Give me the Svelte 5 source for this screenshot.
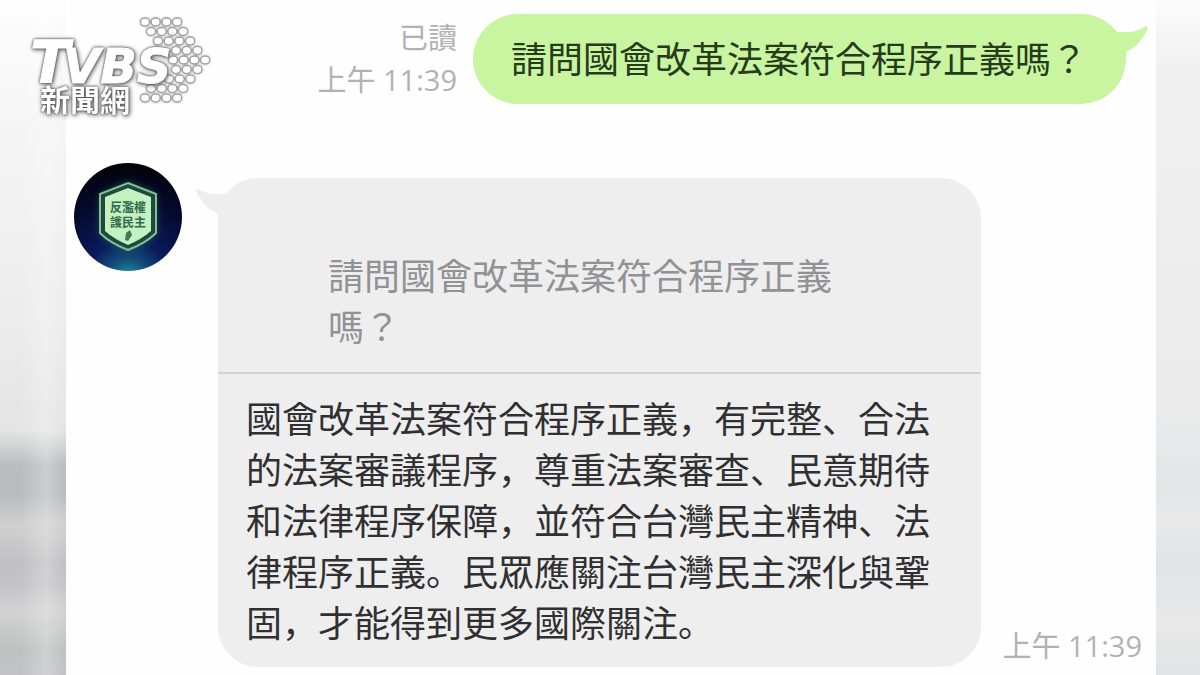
<script lang="ts">
    const question = '請問國會改革法案符合程序正義嗎？';
    const answer = '國會改革法案符合程序正義，有完整、合法的法案審議程序，尊重法案審查、民意期待和法律程序保障，並符合台灣民主精神、法律程序正義。民眾應關注台灣民主深化與鞏固，才能得到更多國際關注。';
    const sentAt = '上午 11:39';

    // x of the first dot in each row, and how many dots follow
    const dotRows = [
        [ 145, 4 ],
        [ 151, 4 ],
        [ 158, 4 ],
        [ 176, 3 ],
        [ 173, 4 ],
        [ 176, 3 ],
        [ 169, 3 ],
        [ 151, 4 ],
        [ 145, 4 ]
    ];

    const dots = dotRows.flatMap( ( [ start, count ], row ) =>
        Array.from( { length: count }, ( _, i ) => ({
            x: start + i * 10.7,
            y: 22 + row * 9.5
        }) )
    );
</script>

<div class='page'>
    <svg class='logo' width='220' height='124' viewBox='0 0 220 124' role='img' aria-label='TVBS 新聞網'>
        <g class='dots'>
            {#each dots as dot}
            <ellipse cx={dot.x} cy={dot.y} rx='4' ry='3.4' />
            {/each}
        </g>
        <text class='brand' x='30' y='83'>T<tspan class='small' x='63'>VBS</tspan></text>
        <text class='sub' x='40' y='111'>新聞網</text>
    </svg>

    <main class='chat'>
        <section class='row sent'>
            <div class='meta'>
                <span>已讀</span>
                <time datetime='11:39'>{sentAt}</time>
            </div>
            <p class='bubble green'>
                {question}
                <svg class='tail' width='34' height='32' viewBox='0 0 34 32' aria-hidden='true'>
                    <path d='M-8 6 H12 Q22 6 31 0 Q34 1 32 4 Q25 20 11 26 V34 H-8 Z' />
                </svg>
            </p>
        </section>

        <section class='row received'>
            <svg class='avatar' width='108' height='108' viewBox='0 0 108 108' role='img' aria-label='反濫權 護民主'>
                <defs>
                    <radialGradient id='night' cx='50%' cy='108%' r='105%'>
                        <stop offset='0' stop-color='#2aa0a6' />
                        <stop offset='0.17' stop-color='#14527a' />
                        <stop offset='0.36' stop-color='#0a1a5c' />
                        <stop offset='0.7' stop-color='#050a30' />
                        <stop offset='1' stop-color='#01030a' />
                    </radialGradient>
                    <filter id='glow' x='-30%' y='-30%' width='160%' height='160%'>
                        <feGaussianBlur stdDeviation='4' />
                    </filter>
                </defs>
                <circle cx='54' cy='54' r='54' fill='url(#night)' />
                <path d='M54 19 L82 31 V71 Q72 81 54 88 Q36 81 26 71 V31 Z' fill='#2f7a52' opacity='0.6' filter='url(#glow)' />
                <path d='M54 20 L82 31 V70 Q72 80 54 87 Q36 80 26 70 V31 Z' fill='#1c4a3c' stroke='#84bd98' stroke-width='2' />
                <path d='M54 25 L77 34 V68 Q68 76 54 82 Q40 76 31 68 V34 Z' fill='#c4f0c2' />
                <text x='54' y='49' text-anchor='middle'>反濫權</text>
                <text x='54' y='64' text-anchor='middle'>護民主</text>
                <path d='M56 67 L58 72 L54 78 L51 77 L52 70 Z' fill='#3d7a55' />
            </svg>

            <article class='bubble gray'>
                <svg class='tail' width='34' height='32' viewBox='0 0 34 32' aria-hidden='true'>
                    <path d='M42 6 H22 Q12 6 3 1 Q-1 0 2 5 Q9 20 23 26 V34 H42 Z' />
                </svg>
                <blockquote>{question}</blockquote>
                <p>{answer}</p>
            </article>

            <time class='meta' datetime='11:39'>{sentAt}</time>
        </section>
    </main>
</div>

<style>
    :global(body) {
        margin: 0;
    }

    .page {
        position: relative;
        box-sizing: border-box;
        min-height: 100vh;
        padding: 0 44px 0 66px;
        background:
            linear-gradient(#fbfbfb 0, #f0f0f0 70px, #ebebeb 400px, #e3e5e8 480px, #e8e8e8 520px, #e1e3e7 565px, #e8e8e8 620px, #e2e3e4 675px) right / 44px 100% no-repeat,
            linear-gradient(90deg, transparent 30%, rgba(255, 255, 255, 0.25) 70%, transparent) left / 66px 100% no-repeat,
            linear-gradient(#fdfdfd 0, #f4f4f4 140px, #ececec 320px, #e4e4e4 430px, #babdc0 465px, #b9bcbf 495px, #d0d0d1 525px, #c0c0c2 565px, #c4c4c6 585px, #d2d2d3 610px, #bfc1c1 650px, #c2c2c4 675px);
        font-family: 'Open Sans', 'Noto Sans CJK JP', sans-serif;
    }

    .logo {
        position: absolute;
        top: 0;
        left: 0;
        z-index: 1;
        fill: #fff;
    }

    .dots {
        filter: drop-shadow(0 0 1px #333) drop-shadow(0 0 1px #777);
    }

    .brand {
        font: italic 700 58px 'DejaVu Sans', sans-serif;
        stroke: #fff;
        stroke-width: 1px;
        filter: drop-shadow(0 0 1px #444) drop-shadow(1px 1px 2px #666);
    }

    .small {
        font-size: 48px;
    }

    .sub {
        font: 700 30px 'Noto Sans CJK TC', sans-serif;
        filter: drop-shadow(0 0 1px #444) drop-shadow(1px 1px 2px #666);
    }

    .chat {
        box-sizing: border-box;
        min-height: 100vh;
        padding: 14px 14px 8px 8px;
        background: #fefefe;
    }

    .row {
        display: flex;
    }

    .sent {
        justify-content: flex-end;
        align-items: center;
        gap: 16px;
        padding-right: 16px;
    }

    .received {
        align-items: flex-start;
        margin-top: 59px;
    }

    .meta {
        display: flex;
        flex-direction: column;
        align-items: flex-end;
        font-size: 29px;
        line-height: 42px;
        color: #b2b2b4;
        white-space: nowrap;
    }

    .received .meta {
        align-self: flex-end;
        margin-left: 22px;
    }

    .bubble {
        position: relative;
        font-family: 'Noto Sans CJK JP', sans-serif;
        font-size: 36px;
        line-height: 51px;
    }

    .green {
        margin: 0;
        padding: 18px 39px 21px 38px;
        border-radius: 45px;
        background: #c9f5a0;
        color: #263a1c;
    }

    .gray {
        flex: 1;
        min-width: 0;
        margin: 15px 0 0 36px;
        border-radius: 40px;
        background: #eee;
        color: #303032;
    }

    .tail {
        position: absolute;
    }

    .green .tail {
        top: 12px;
        right: -23px;
        fill: #c9f5a0;
    }

    .gray .tail {
        top: 10px;
        left: -23px;
        fill: #eee;
    }

    blockquote {
        margin: 0;
        padding: 71px 120px 21px 110px;
        border-bottom: 2px solid #d3d3d4;
        color: #929296;
    }

    .gray p {
        margin: 0;
        padding: 18px 28px 20px;
    }

    .avatar {
        flex: none;
    }

    .avatar text {
        font: 700 12px 'Noto Sans CJK TC', sans-serif;
        fill: #2f6b4c;
    }
</style>
